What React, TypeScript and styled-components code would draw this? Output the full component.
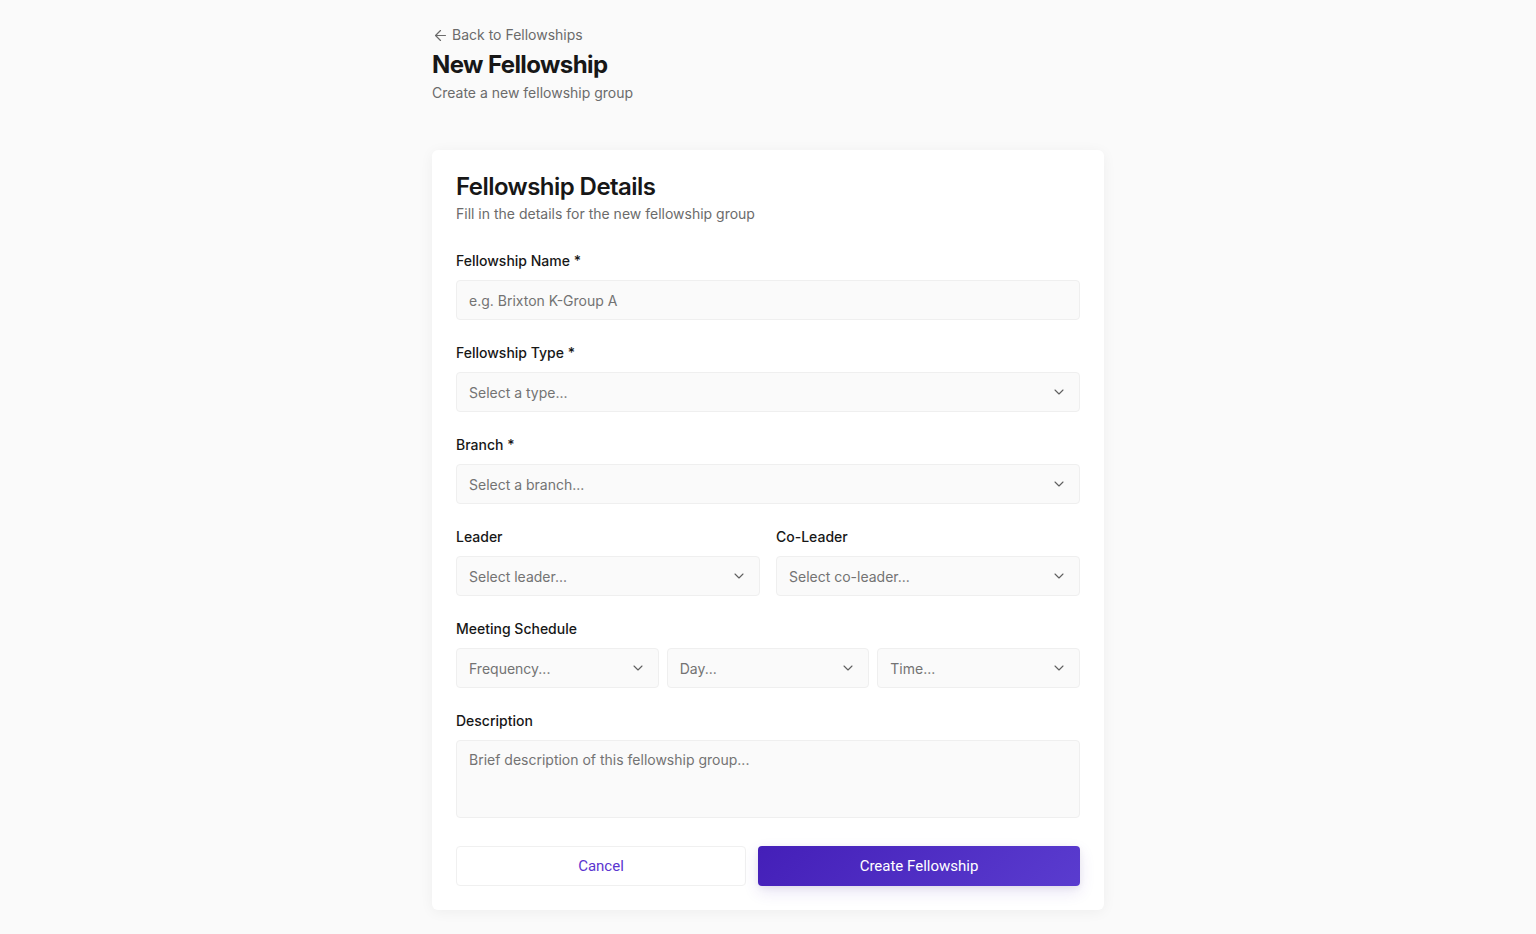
import styled, { createGlobalStyle } from 'styled-components';
import { ArrowLeft, ChevronDown } from 'lucide-react';

const GlobalStyle = createGlobalStyle`
    html, body {
        margin: 0;
        padding: 0;
        background: #fafafa;
        font-family: "Inter", "Noto Sans", sans-serif;
        color: #171717;
    }
    * { box-sizing: border-box; }
`

interface SelectProps {
    placeholder: string;
}

function SelectBox({ placeholder }: SelectProps) {
    return (
        <Select>
            <span>{placeholder}</span>
            <ChevronDown size={16} strokeWidth={1.6} color="#5f5f5f" />
        </Select>
    )
}

export default function App() {
    return (
        <>
            <GlobalStyle />
            <Page>
                <Container>
                    <BackLink href="#">
                        <ArrowLeft size={17} strokeWidth={1.7} />
                        Back to Fellowships
                    </BackLink>
                    <PageTitle>New Fellowship</PageTitle>
                    <PageSubtitle>Create a new fellowship group</PageSubtitle>

                    <Card>
                        <CardTitle>Fellowship Details</CardTitle>
                        <CardSubtitle>Fill in the details for the new fellowship group</CardSubtitle>

                        <Form>
                            <Field>
                                <Label>Fellowship Name *</Label>
                                <Input placeholder="e.g. Brixton K-Group A" />
                            </Field>
                            <Field>
                                <Label>Fellowship Type *</Label>
                                <SelectBox placeholder="Select a type..." />
                            </Field>
                            <Field>
                                <Label>Branch *</Label>
                                <SelectBox placeholder="Select a branch..." />
                            </Field>
                            <Row cols={2} gap={16}>
                                <Field>
                                    <Label>Leader</Label>
                                    <SelectBox placeholder="Select leader..." />
                                </Field>
                                <Field>
                                    <Label>Co-Leader</Label>
                                    <SelectBox placeholder="Select co-leader..." />
                                </Field>
                            </Row>
                            <Field>
                                <Label>Meeting Schedule</Label>
                                <Row cols={3} gap={8}>
                                    <SelectBox placeholder="Frequency..." />
                                    <SelectBox placeholder="Day..." />
                                    <SelectBox placeholder="Time..." />
                                </Row>
                            </Field>
                            <Field>
                                <Label>Description</Label>
                                <TextArea placeholder="Brief description of this fellowship group..." />
                            </Field>
                        </Form>

                        <Actions>
                            <CancelButton>Cancel</CancelButton>
                            <PrimaryButton>Create Fellowship</PrimaryButton>
                        </Actions>
                    </Card>
                </Container>
            </Page>
        </>
    )
}

const Page = styled.div`
    min-height: 100vh;
    display: flex;
    justify-content: center;
    padding: 25px 0 24px;
`

const Container = styled.div`
    width: 672px;
    display: flex;
    flex-direction: column;
`

const BackLink = styled.a`
    display: flex;
    align-items: center;
    gap: 3px;
    font-size: 14px;
    line-height: 20px;
    color: #6b6b6b;
    text-decoration: none;
`

const PageTitle = styled.h1`
    margin: 4px 0 0;
    font-size: 24px;
    line-height: 32px;
    font-weight: 700;
    letter-spacing: -0.6px;
    color: #171717;
`

const PageSubtitle = styled.p`
    margin: 0;
    font-size: 14px;
    line-height: 24px;
    color: #6b6b6b;
`

const Card = styled.div`
    margin-top: 45px;
    background: #fff;
    border-radius: 6px;
    box-shadow: 0 2px 14px rgba(0, 0, 0, 0.05);
    padding: 24px;
`

const CardTitle = styled.h2`
    margin: 0;
    font-size: 24px;
    line-height: 26px;
    font-weight: 600;
    letter-spacing: -0.55px;
    color: #171717;
`

const CardSubtitle = styled.p`
    margin: 4px 0 0;
    font-size: 14px;
    line-height: 20px;
    color: #6b6b6b;
`

const Form = styled.div`
    margin-top: 27px;
    display: flex;
    flex-direction: column;
    gap: 23px;
`

const Field = styled.div`
    display: flex;
    flex-direction: column;
    gap: 9px;
    min-width: 0;
`

const Row = styled.div<{ cols: number; gap: number }>`
    display: grid;
    grid-template-columns: repeat(${({ cols }) => cols}, 1fr);
    column-gap: ${({ gap }) => gap}px;
`

const Label = styled.label`
    font-size: 14px;
    line-height: 20px;
    font-weight: 500;
    color: #171717;
`

const Input = styled.input`
    height: 40px;
    width: 100%;
    padding: 0 12px;
    border: 1px solid #efefef;
    border-radius: 4px;
    background: #fafafa;
    font-family: "Inter", sans-serif;
    font-size: 14px;
    color: #171717;
    outline: none;

    &::placeholder { color: #737373; }
`

const Select = styled.div`
    height: 40px;
    padding: 0 12px;
    border: 1px solid #efefef;
    border-radius: 4px;
    background: #fafafa;
    display: flex;
    align-items: center;
    justify-content: space-between;
    font-size: 14px;
    color: #737373;
`

const TextArea = styled.textarea`
    height: 78px;
    width: 100%;
    padding: 9px 12px;
    border: 1px solid #efefef;
    border-radius: 4px;
    background: #fafafa;
    font-family: "Inter", sans-serif;
    font-size: 14px;
    line-height: 20px;
    resize: none;
    outline: none;

    &::placeholder { color: #737373; }
`

const Actions = styled.div`
    margin-top: 28px;
    display: grid;
    grid-template-columns: 290fr 322fr;
    gap: 12px;
`

const BaseButton = styled.button`
    height: 40px;
    border-radius: 4px;
    font-family: "Roboto", sans-serif;
    font-size: 15px;
    font-weight: 400;
    cursor: pointer;
`

const CancelButton = styled(BaseButton)`
    background: #fff;
    border: 1px solid #f0f0f0;
    color: #5b35d0;
`

const PrimaryButton = styled(BaseButton)`
    border: none;
    color: #fff;
    background: linear-gradient(135deg, #441fb8 0%, #5a3ccf 100%);
    box-shadow: 0 6px 16px rgba(70, 40, 180, 0.12), 0 2px 6px rgba(0, 0, 0, 0.06);
`
